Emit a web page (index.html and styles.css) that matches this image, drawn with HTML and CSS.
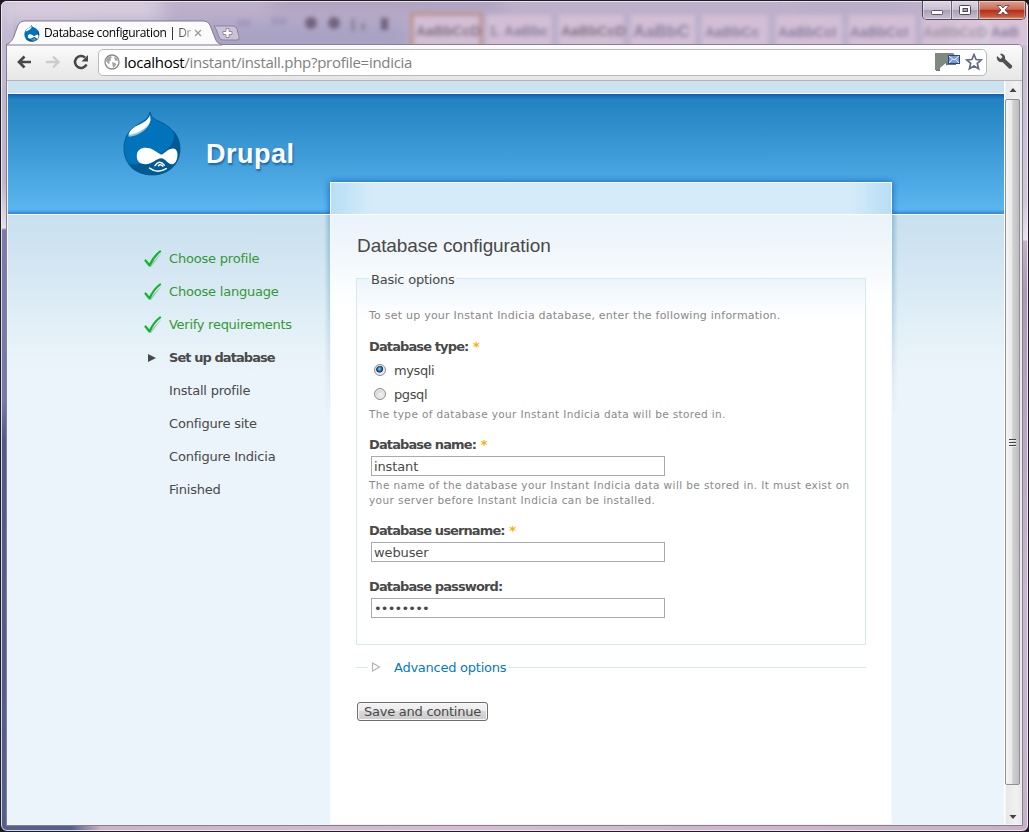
FILE: index.html
```html
<!DOCTYPE html>
<html lang="en">
<head>
<meta charset="utf-8">
<title>Database configuration | Drupal</title>
<link rel="stylesheet" href="styles.css">
</head>
<body>
<svg width="0" height="0" class="defs" aria-hidden="true">
  <defs>
    <symbol id="drop" viewBox="-1 0 60 66">
      <path d="M26.5 0C28 7 33 8 39 11C48 16 57 24 57 37.500C57 54 44 64 29 64C12 64 0 53 0 37C0 25 6 17 14 13C20 9 25 7 26.500 0Z" fill="#0073ba" stroke="#00548c" stroke-width=".8"/>
      <path d="M50 19C56 25 57 32 57 37.500C57 54 44 64 29 64C18 64 9 60 4 52C16 56 27 50 38 42C48 36 53 29 50 19Z" fill="#005a94"/>
      <path d="M26.500 8C27 15 17 24 5 25C3 22 8 17 12 15C18 12 24 9 26.500 5Z" fill="#93c5e4"/>
      <path d="M26.500 3C24 10 17 12 11 15C7 18 4 22 6 23C14 22 26 15 27 8Z" fill="#fff"/>
      <path d="M13 45C13 35 24 35 30 38.500C34 40.500 37 44 39 43C43 40 46 37 50 37C57 37 55 53 49 53C44 53 42 47 38 47C33 47 29 53 22 53C16 53 13 50 13 45Z" fill="#fff"/>
      <path d="M31.500 54.500Q36 48 41 54M35 54.500Q37 52.500 39.500 55M26 57Q34 63 43 57.500" fill="none" stroke="#fff" stroke-width="1.500" stroke-linecap="round"/>
    </symbol>
    <symbol id="check" viewBox="0 0 18 18">
      <path d="M2 11L6 16.500L17 2L6 13Z" fill="#888" opacity=".5" transform="translate(.8 .8)"/>
      <path d="M1.500 10.500L5.500 15.500Q9 7 16 1.500" fill="none" stroke="#0cb62b" stroke-width="2.200" stroke-linejoin="round" stroke-linecap="round"/>
    </symbol>
  </defs>
</svg>
<div class="window">
  <svg class="glass" width="1027" height="44" aria-hidden="true">
    <defs>
      <filter id="soft" x="-10%" y="-50%" width="120%" height="200%"><feGaussianBlur stdDeviation="2.200"/></filter>
      <filter id="wide" x="-20%" y="-50%" width="140%" height="200%"><feGaussianBlur stdDeviation="9"/></filter>
    </defs>
    <g filter="url(#wide)">
      <rect x="0" y="-6" width="160" height="26" fill="#d8cfdf"/>
      <rect x="90" y="22" width="320" height="30" fill="#a7a1c3"/>
      <rect x="270" y="-10" width="230" height="20" fill="#aca0bf"/>
      <rect x="800" y="-10" width="100" height="24" fill="#b7adc9"/>
      <rect x="950" y="0" width="90" height="50" fill="#d9d0e0"/>
    </g>
    <g filter="url(#soft)">
      <g fill="#d9c2d8" opacity=".8">
        <rect x="411" y="13" width="69" height="34" stroke="#bd8f87" stroke-width="4"/>
        <rect x="486" y="14" width="64" height="32"/><rect x="558" y="14" width="64" height="32"/>
        <rect x="630" y="14" width="64" height="32"/><rect x="701" y="14" width="66" height="32"/>
        <rect x="775" y="14" width="66" height="32"/><rect x="848" y="14" width="66" height="32"/>
        <rect x="921" y="14" width="60" height="32"/><rect x="988" y="14" width="45" height="32"/>
      </g>
      <g fill="#5d4d66" opacity=".75"><circle cx="310" cy="22" r="6"/><circle cx="333" cy="22" r="6"/><rect x="380" y="17" width="7" height="12"/><path d="M350 18h4v12h-4zM360 22h4v7h-4z" opacity=".5"/><path d="M236 22h14M270 20h16" stroke="#8178a5" stroke-width="7" opacity=".4"/></g>
      <g class="ghost">
        <text x="415" y="35" fill="#55425a">AaBbCcD</text><text x="488" y="35">1. AaBbc</text>
        <text x="560" y="35" fill="#55425a">AaBbCcD</text><text x="632" y="36" font-size="17">AaBbC</text>
        <text x="704" y="36" font-size="14">AaBbCc</text><text x="777" y="36">AaBbCcI</text>
        <text x="849" y="36">AaBbCcI</text><text x="922" y="36" fill="#8b8096">AaBbCcD</text>
        <text x="990" y="36">AaB</text>
      </g>
    </g>
  </svg>
  <div class="titlebar">
    <div class="tab">
      <svg class="tab-shape" width="212" height="25" aria-hidden="true"><path d="M0 25C5 22 6 21 8 16L12 5Q14 1 18 1H198Q202 1 204 5L209 18Q211 24 216 24.500V25Z" fill="#fbfbfb" stroke="#81798a"/></svg>
      <svg class="favicon" width="16" height="17"><use href="#drop"/></svg>
      <span class="tab-title">Database configuration | Dr</span>
      <svg class="tab-close" width="8" height="8"><path d="M1 1l6 6M7 1L1 7" stroke="#999" stroke-width="1.300"/></svg>
    </div>
    <svg class="newtab" width="29" height="17"><path d="M1 1H20Q23 1 24 4L26 12Q27 15 24 15H10Q7 15 6 12L3 4Z" fill="#d3c9dc" fill-opacity=".8" stroke="#8c8398"/><path d="M10 6.500h3v-3h3v3h3v3h-3v3h-3v-3h-3z" fill="#fff" stroke="#8c8398" stroke-width=".9"/></svg>
    <div class="controls">
      <span class="ctl"><svg width="28" height="17"><rect x="8.500" y="9.500" width="11" height="4" rx="1" fill="#fff" stroke="#5b5268"/></svg></span>
      <span class="ctl"><svg width="26" height="17"><rect x="7.500" y="4.500" width="11" height="9" rx="1" fill="#fff" stroke="#4b4658"/><rect x="11" y="7.500" width="4.500" height="3" fill="#aaa3b6" stroke="#4b4658"/></svg></span>
      <span class="ctl close"><svg width="46" height="17"><path d="M18 4.500h4l2 2.500 2-2.500h4l-4 4.500 4 4.500h-4l-2-2.500-2 2.500h-4l4-4.500z" fill="#fff" stroke="#624b55" stroke-width=".9"/></svg></span>
    </div>
  </div>
  <div class="client">
    <div class="toolbar">
      <svg class="ico" width="17" height="16"><path d="M8.500 2.500L3 8l5.500 5.500M3 8h12" fill="none" stroke="#484848" stroke-width="2.700"/></svg>
      <svg class="ico fwd" width="17" height="16"><path d="M8 2.500L13.500 8 8 13.500M14 8H1" fill="none" stroke="#ccc" stroke-width="2.400"/></svg>
      <svg class="ico reload" width="17" height="16"><path d="M13.500 10.500A6 6 0 1 1 12 3.500" fill="none" stroke="#484848" stroke-width="2.600"/><path d="M15 1v6.500H8.500z" fill="#484848"/></svg>
      <div class="address">
        <svg width="16" height="16"><circle cx="8" cy="8" r="7" fill="#fff" stroke="#888" stroke-width="1.300"/><path d="M2.500 4L6 2l2 1L6.500 5l.5 1.500L5 7.500l1 1.500-1.500 1L2 7zM8 8l3 1 1.500 1-2 3-1.500 1L8.500 11zM10 3l3 1 1 3-3-.5z" fill="#a5a5a5"/></svg>
        <span class="url"><b>localhost</b>/instant/install.php?profile=indicia</span>
        <svg class="ext" width="26" height="20"><path d="M0 1h18l3 4v8H12L5 19H1z" fill="#6c766c"/><path d="M0 1h18v3L4 18H0z" fill="#7f897f"/><path d="M5 20v-4l6-5v3h12v6z" fill="#fff"/><rect x="13.500" y="3.500" width="11" height="8" fill="#7b9bd0" stroke="#23498c"/><path d="M14 4l5 4 5-4M14 11l3.500-4M24 11l-3.500-4" fill="none" stroke="#e7effd"/></svg>
        <svg class="star" width="18" height="18"><path d="M9 1.500l2.100 5 5.200.4-4 3.500 1.300 5.300L9 12.900l-4.600 2.800 1.300-5.300-4-3.500 5.200-.4z" fill="#fff" stroke="#606b82" stroke-width="1.700"/></svg>
      </div>
      <svg class="wrench" width="18" height="18"><path d="M2 3l3.500 3L7.500 4 5 1C8 0 11 3 10 6l7 6.500c1 2-1.500 4-3 3L7.500 9C4.500 10 1 7 2 3z" fill="#505050"/></svg>
    </div>
    <div class="view">
      <div class="page">
        <div class="page-top"></div>
        <header class="header">
          <svg class="logo" width="59" height="65"><use href="#drop"/></svg>
          <h1>Drupal</h1>
        </header>
        <div class="columns">
          <nav class="steps">
            <ol>
              <li class="done"><svg width="18" height="18"><use href="#check"/></svg><span>Choose profile</span></li>
              <li class="done"><svg width="18" height="18"><use href="#check"/></svg><span>Choose language</span></li>
              <li class="done"><svg width="18" height="18"><use href="#check"/></svg><span class="tight">Verify requirements</span></li>
              <li class="active"><svg width="18" height="18"><path d="M4 5v8l8-4z" fill="#494949"/></svg><span>Set up database</span></li>
              <li><i></i><span>Install profile</span></li>
              <li><i></i><span>Configure site</span></li>
              <li><i></i><span>Configure Indicia</span></li>
              <li><i></i><span>Finished</span></li>
            </ol>
          </nav>
          <main class="panel">
            <div class="panel-top"></div>
            <div class="panel-body">
              <h2>Database configuration</h2>
              <fieldset class="basic">
                <legend>Basic options</legend>
                <p class="intro">To set up your Instant Indicia database, enter the following information.</p>
                <div class="label">Database type: <em>*</em></div>
                <label class="radio"><span class="dot on"></span>mysqli</label>
                <label class="radio"><span class="dot"></span>pgsql</label>
                <p class="desc">The type of database your Instant Indicia data will be stored in.</p>
                <div class="label gap">Database name: <em>*</em></div>
                <input type="text" value="instant">
                <p class="desc two">The name of the database your Instant Indicia data will be stored in. It must exist on<br>your server before Instant Indicia can be installed.</p>
                <div class="label gap">Database username: <em>*</em></div>
                <input type="text" value="webuser">
                <div class="label pass">Database password:</div>
                <input class="secret" type="text" value="••••••••">
              </fieldset>
              <div class="advanced">
                <svg width="10" height="10"><path d="M1.500 1v8L8.500 5z" fill="#fff" stroke="#b4b4b4" stroke-width="1.200"/></svg>
                <a>Advanced options</a>
              </div>
              <button type="button">Save and continue</button>
            </div>
          </main>
        </div>
      </div>
      <div class="scrollbar">
        <svg width="16" height="18"><path d="M4.500 11L8 7l3.500 4z" fill="#444"/></svg>
        <div class="thumb"><i></i><i></i><i></i></div>
        <svg width="16" height="18"><path d="M4.500 7L8 11l3.500-4z" fill="#444"/></svg>
      </div>
    </div>
  </div>
</div>
</body>
</html>
```
FILE: styles.css
```css
* { box-sizing: border-box; }
body { margin: 0; background: #1c1b20; overflow: hidden; }
.defs { position: absolute; }
svg { display: block; flex: none; }
h1, h2, p, ol { margin: 0; padding: 0; font-weight: normal; }

.window {
  position: relative;
  width: 1029px; height: 832px;
  border: 1px solid #201c22;
  border-radius: 7px;
  overflow: hidden;
  background:
    linear-gradient(#c5bbd2 0, #d0c6da 200px, #e9e2ec 239px, #c4b0c8 240px, #ac98b8 290px, #c9b8d0 600px, #c7b1c9 100%) right / 12px 100% no-repeat,
    linear-gradient(#c2bad3 0, #bdb4ce 180px, #e6dfec 227px, #7b7aab 229px, #747aab 400px, #4f5b8d 440px, #52608e 100%) left / 12px 100% no-repeat,
    linear-gradient(90deg, #52608e 0, #52608e 70px, #c9b4cc 100px, #d3bdd5 460px, #c7b1c9 100%) bottom / 100% 10px no-repeat,
    #bdb0cb;
}
.window::after {
  content: ""; position: absolute; inset: 0; pointer-events: none;
  border: 1px solid #f3edf6; border-radius: 6px; opacity: .85;
}
.glass { position: absolute; left: 0; top: 0; }
.ghost { font: bold 14px "Liberation Sans", Arial, sans-serif; fill: #625d88; opacity: .75; }

.titlebar { position: relative; z-index: 1; height: 43px; display: flex; padding-left: 5px; align-items: flex-start; }
.tab { position: relative; width: 212px; height: 25px; margin: 19px 0 -1px; display: flex; align-items: center; padding-left: 18px; }
.tab-shape { position: absolute; left: 0; top: 0; overflow: visible; }
.favicon { position: relative; margin-top: 1px; }
.tab-title {
  position: relative; width: 147px; margin-left: 4px; white-space: nowrap;
  font: 12px/18px "Open Sans", "Noto Sans", sans-serif; letter-spacing: -.37px; color: #000;
  -webkit-mask: linear-gradient(90deg, #000 128px, rgba(0,0,0,.35) 146px);
}
.tab-close { position: relative; margin-left: 3px; }
.newtab { margin: 24px 0 0 -5px; }
.controls {
  display: flex; height: 19px; margin-left: auto; margin-right: 2px;
  border: 1px solid #51485a; border-top: 0; border-radius: 0 0 5px 5px; overflow: hidden;
}
.ctl { background: linear-gradient(#dcd5e3, #c8bfd2 48%, #aaa0b7 52%, #c9c0d2); border-right: 1px solid #6b6176; box-shadow: inset 0 0 0 1px rgba(255,255,255,.4); }
.ctl.close { border: 0; width: 46px; background: linear-gradient(#dfa18f, #cc6b56 46%, #b3301b 52%, #c9573b 85%, #e39a75); }

.client { position: relative; width: 1017px; height: 782px; margin-left: 5px; border: 1px solid #86808c; border-radius: 0 5px 0 0; background: #f4f4f4; overflow: hidden; }
.toolbar { height: 36px; display: flex; align-items: center; padding: 0 9px 1px 9px; background: linear-gradient(#fbfbfb, #e6e6e6); border-bottom: 1px solid #b6b2bc; }
.fwd { margin-left: 12px; }
.reload { margin-left: 11px; }
.address { display: flex; align-items: center; width: 889px; height: 27px; margin: 0 8px 0 auto; padding: 0 3px 0 5px; background: #fff; border: 1px solid #bababa; border-radius: 5px; }
.url { flex: 1; margin-left: 4px; font: 15px/24px "Open Sans", "Noto Sans", sans-serif; color: #808080; letter-spacing: -.28px; white-space: nowrap; }
.url b { font-weight: normal; color: #000; }
.star { margin-left: 4px; }

.view { display: flex; height: 744px; padding-left: 1px; }
.page { width: 996px; height: 743px; background: #ebf3fb; overflow: hidden; font: 13px/16px Verdana, "DejaVu Sans", sans-serif; letter-spacing: -.2px; color: #494949; display: flex; flex-direction: column; }
.page-top { flex: none; height: 12px; background: #cde2f0; }
.header { flex: none; height: 122px; border-top: 1px solid #fff; border-bottom: 1px solid #fff; display: flex; padding: 18px 0 0 115px;
  background: linear-gradient(#1659ae 0, #1b6bb8 2px, #2283c2 5px, #2585c3 12px, #5ab5ee 114px, #57b1ee 116px, #2c84da 120px); }
.logo { overflow: visible; }
h1 { margin-left: 24px; padding-top: 26px; font: bold 27px/32px "Liberation Sans", Arial, sans-serif; letter-spacing: .5px; color: #fff; text-shadow: 1px 2px 2px #1865aa; }
.columns { flex: 1; display: flex; background: linear-gradient(#c9e0ee 0, #d0e4f1 38px, #e3f0f7 115px, #eaf3fa 150px, #ebf3fb 165px); }
.steps { width: 322px; padding: 27px 0 0 136px; }
.steps ol { list-style: none; }
.steps li { display: flex; align-items: center; height: 33px; white-space: nowrap; }
.steps li svg, .steps li i { width: 18px; margin-right: 7px; }
.done { color: #339933; }
.tight { letter-spacing: -.27px; }
.active { font-weight: bold; letter-spacing: -.93px; }

.panel { position: relative; width: 562px; margin-top: -33px; border-radius: 2px; }
.panel::before { content: ""; position: absolute; z-index: 0; inset: 0 0 auto; height: 250px; box-shadow: 0 0 7px #0b5fc0; clip-path: inset(-7px -7px 218px -7px); }
.panel-top { position: relative; height: 33px; border: 1px solid #fff; background: linear-gradient(90deg, #b7def6, #d5ebf9 41px, #d5ebf9 519px, #b7def6); }
.panel-body { position: relative; height: 609px; padding: 21px 26px 0; border-left: 1px solid #f6fbfd; border-right: 1px solid #f6fbfd;
  background: linear-gradient(#eaf3fb 0, #f0f6fb 30px, #fff 90px); }
.panel-body::before, .panel-body::after { content: ""; position: absolute; top: 0; width: 6px; height: 200px; opacity: .8; }
.panel-body::before { right: 561px; background: linear-gradient(90deg, transparent, #80b2d1); -webkit-mask: linear-gradient(#000, transparent); }
.panel-body::after { left: 561px; background: linear-gradient(270deg, transparent, #80b2d1); -webkit-mask: linear-gradient(#000, transparent); }
h2 { height: 34px; font: 19px/19px "Liberation Sans", Arial, sans-serif; letter-spacing: -.08px; color: #494949; white-space: nowrap; }
.basic { width: 510px; height: 375px; margin: 0 0 0 -1px; padding: 22px 12px 0; border: 1px solid #d6e8f3; background: linear-gradient(#edf5fb, #fff 40px); min-width: 0; white-space: nowrap; }
legend { height: 16px; margin: 0; padding: 0 2px; line-height: 19px; letter-spacing: -.23px; }
.intro { font-size: 11px; line-height: 16px; letter-spacing: .23px; color: #898989; margin-bottom: 15px; }
.label { height: 16px; font-weight: bold; letter-spacing: -.88px; }
.label em { font-style: normal; color: #ffae00; margin-left: 1px; }
.label.gap { margin-top: 15px; }
.label.pass { margin-top: 17px; }
.radio { display: flex; align-items: center; height: 24px; padding-left: 5px; letter-spacing: -.4px; }
.label + .radio { margin-top: 4px; }
.dot { width: 12px; height: 12px; margin: -3px 8px 0 0; border: 1px solid #8d8d8d; border-radius: 50%; background: radial-gradient(circle at 60% 60%, #f2f2f2, #c7c7c7); box-shadow: inset 0 0 0 1px #eee; }
.dot.on { background: radial-gradient(circle at 45% 40%, #8cdcf8 0, #1e76a8 2px, #103450 3.200px, #e9e9e9 4px); }
.desc { font-size: 10.5px; line-height: 15px; letter-spacing: .36px; color: #898989; }
.desc.two { margin-top: 2px; letter-spacing: .41px; }
input { display: block; width: 294px; height: 20px; margin: 3px 0 0 2px; padding: 0 2px; border: 1px solid #a9a9af; background: #fff; font: 13px/16px Verdana, "DejaVu Sans", sans-serif; letter-spacing: -.12px; color: #494949; outline: 0; border-radius: 0; }
.secret { letter-spacing: -.8px; }
.advanced { display: flex; align-items: center; width: 510px; height: 16px; margin: 14px 0 0 -1px; letter-spacing: -.25px; color: #027ac6; }
.advanced::before { content: ""; width: 12px; height: 1px; background: #d6e8f3; margin-right: 3px; }
.advanced a { margin: 1px 2px 0 13px; white-space: nowrap; }
.advanced::after { content: ""; flex: 1; height: 1px; background: #d6e8f3; }
button { display: block; width: 131px; height: 19px; margin: 27px 0 0; padding: 0; border: 1px solid #6d6d6d; border-radius: 3px; font: 13px/16px Verdana, "DejaVu Sans", sans-serif; letter-spacing: -.25px; color: #494949; background: linear-gradient(#f3f3f3 0, #ebebeb 48%, #d8d8d8 50%, #cbcbcb); box-shadow: inset 0 0 0 1px #f8f8f8; white-space: nowrap; }

.scrollbar { width: 18px; height: 743px; padding: 0 1px; background: linear-gradient(90deg, #fff 1px, #e8e8e8 2px, #f1f1f1 70%, #e8e8e8); }
.thumb { display: flex; flex-direction: column; justify-content: center; align-items: center; gap: 2px; width: 15px; height: 686px; margin-bottom: 23px; border: 1px solid #8f8f94; border-radius: 2px; background: linear-gradient(90deg, #f6f6f6, #e9e9ea 45%, #d1d1d4 52%, #bdbdc1); }
.thumb i { width: 7px; height: 1px; background: #444; box-shadow: 0 1px #eee; }
```
